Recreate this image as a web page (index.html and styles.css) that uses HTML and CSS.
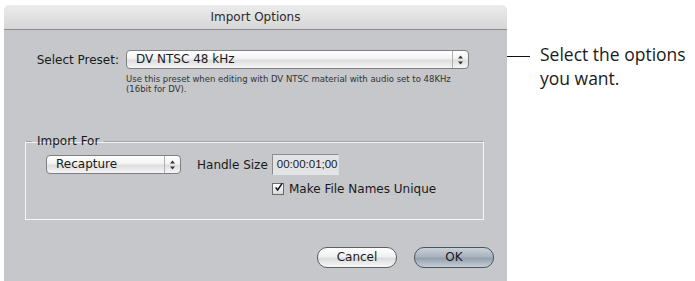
FILE: index.html
```html
<!DOCTYPE html>
<html>
<head>
<meta charset="utf-8">
<link rel="stylesheet" href="styles.css">
</head>
<body>
<div class="page">
  <div class="dialog">
    <div class="titlebar">Import Options</div>
    <div class="content">
      <div class="preset-row">
        <span class="label">Select Preset:</span>
        <div class="popup popup-wide">
          <span class="popup-text">DV NTSC 48 kHz</span>
          <span class="arrows"><svg width="7" height="10" viewBox="0 0 7 10"><path d="M3.5 0.5 L6 3.5 H1 Z M3.5 9.5 L6 6.5 H1 Z" fill="#333"/></svg></span>
        </div>
      </div>
      <p class="desc">Use this preset when editing with DV NTSC material with audio set to 48KHz<br>(16bit for DV).</p>
      <fieldset class="group">
        <legend class="legend">Import For</legend>
        <div class="group-row">
          <div class="popup popup-small">
            <span class="popup-text">Recapture</span>
            <span class="arrows"><svg width="7" height="10" viewBox="0 0 7 10"><path d="M3.5 0.5 L6 3.5 H1 Z M3.5 9.5 L6 6.5 H1 Z" fill="#333"/></svg></span>
          </div>
          <span class="handle-label">Handle Size</span>
          <span class="field">00:00:01;00</span>
        </div>
        <div class="check-row">
          <span class="checkbox"><svg width="11" height="11" viewBox="0 0 11 11"><path d="M2 5.5 L4.5 8.5 L10 0.5" fill="none" stroke="#111" stroke-width="1.8"/></svg></span>
          <span class="check-label">Make File Names Unique</span>
        </div>
      </fieldset>
      <div class="buttons">
        <span class="btn btn-cancel">Cancel</span>
        <span class="btn btn-ok">OK</span>
      </div>
    </div>
  </div>
  <div class="callout">
    <span class="callout-line"></span>
    <span class="callout-text">Select the options<br>you want.</span>
  </div>
</div>
</body>
</html>
```
FILE: styles.css
```css
html, body {
  margin: 0;
  padding: 0;
  background: #ffffff;
}
.page {
  display: flex;
  align-items: flex-start;
  width: 695px;
  height: 281px;
  overflow: hidden;
}
.dialog {
  margin: 5px 0 0 4px;
  width: 503px;
  height: 276px;
  background: #c5c7ca;
  border-radius: 6px 6px 0 0;
  font-family: "DejaVu Sans", sans-serif;
  color: #1a1a1a;
  display: flex;
  flex-direction: column;
  flex-shrink: 0;
}
.titlebar {
  height: 24px;
  line-height: 24px;
  text-align: center;
  font-size: 12px;
  color: #2a2a2a;
  background: linear-gradient(#ececec, #d6d6d6);
  border-radius: 6px 6px 0 0;
  border-bottom: 1px solid #8c8c8c;
}
.content {
  display: flex;
  flex-direction: column;
}
.preset-row {
  display: flex;
  align-items: center;
  margin-top: 20px;
}
.label {
  width: 115px;
  text-align: right;
  font-size: 12px;
  margin-right: 7px;
}
.popup {
  height: 17px;
  border: 1px solid #7f7f7f;
  border-radius: 4px;
  background: linear-gradient(#ffffff 0%, #f2f2f2 45%, #dedede 55%, #f6f6f6 100%);
  display: flex;
  align-items: center;
  box-sizing: content-box;
}
.popup-wide {
  width: 341px;
}
.popup-small {
  width: 133px;
}
.popup-text {
  flex: 1;
  font-size: 12px;
  padding-left: 9px;
  line-height: 17px;
}
.arrows {
  width: 15px;
  height: 17px;
  border-left: 1px solid #b0b0b0;
  display: flex;
  align-items: center;
  justify-content: center;
}
.desc {
  margin: 5px 0 0 122px;
  font-size: 8.5px;
  line-height: 10px;
  color: #333;
}
.group {
  margin: 40px 0 0 21px;
  width: 457px;
  height: 84px;
  padding: 0;
  border: 1px solid #f6f6f6;
  border-top-color: #a3a3a3;
  box-shadow: inset 0 1px 0 #f3f3f3;
  min-width: 0;
  box-sizing: content-box;
}
.legend {
  font-size: 12px;
  margin-left: 6px;
  padding: 0 5px;
  line-height: 14px;
}
.group-row {
  display: flex;
  align-items: center;
  margin: 6px 0 0 20px;
}
.handle-label {
  font-size: 12px;
  margin-left: 16px;
}
.field {
  margin-left: 4px;
  font-family: "Liberation Sans", sans-serif;
  font-size: 11.5px;
  background: #e2e3e6;
  border: 1px solid #8b8b8b;
  border-right-color: #e0e0e0;
  border-bottom-color: #e6e6e6;
  padding: 2px 2px 2px 4px;
  width: 59px;
  line-height: 15px;
}
.check-row {
  display: flex;
  align-items: center;
  margin: 7px 0 0 246px;
}
.checkbox {
  width: 10px;
  height: 10px;
  border: 1px solid #6b6b6b;
  background: linear-gradient(#ffffff, #d8d8d8);
  display: flex;
  align-items: center;
  justify-content: center;
  margin-right: 5px;
  overflow: visible;
}
.checkbox svg {
  margin: -3px 0 0 1px;
}
.check-label {
  font-size: 12px;
}
.buttons {
  display: flex;
  justify-content: flex-end;
  gap: 17px;
  margin: 27px 13px 0 0;
}
.btn {
  width: 78px;
  height: 19px;
  line-height: 19px;
  border-radius: 10px;
  text-align: center;
  font-size: 12px;
  border: 1px solid #5f5f5f;
}
.btn-cancel {
  background: linear-gradient(#ffffff 0%, #f1f1f1 45%, #dcdcdc 55%, #f8f8f8 100%);
}
.btn-ok {
  background: linear-gradient(#c9d0d8 0%, #a9b3bf 45%, #95a1ae 55%, #c6ced7 100%);
  border-color: #4c5560;
}
.callout {
  display: flex;
  align-items: flex-start;
  margin-top: 42px;
}
.callout-line {
  width: 23px;
  height: 1px;
  background: #111;
  margin-top: 14px;
  margin-right: 10px;
}
.callout-text {
  font-family: "Open Sans", sans-serif;
  font-size: 17.5px;
  line-height: 24px;
  color: #1a1a1a;
  white-space: nowrap;
}
```
